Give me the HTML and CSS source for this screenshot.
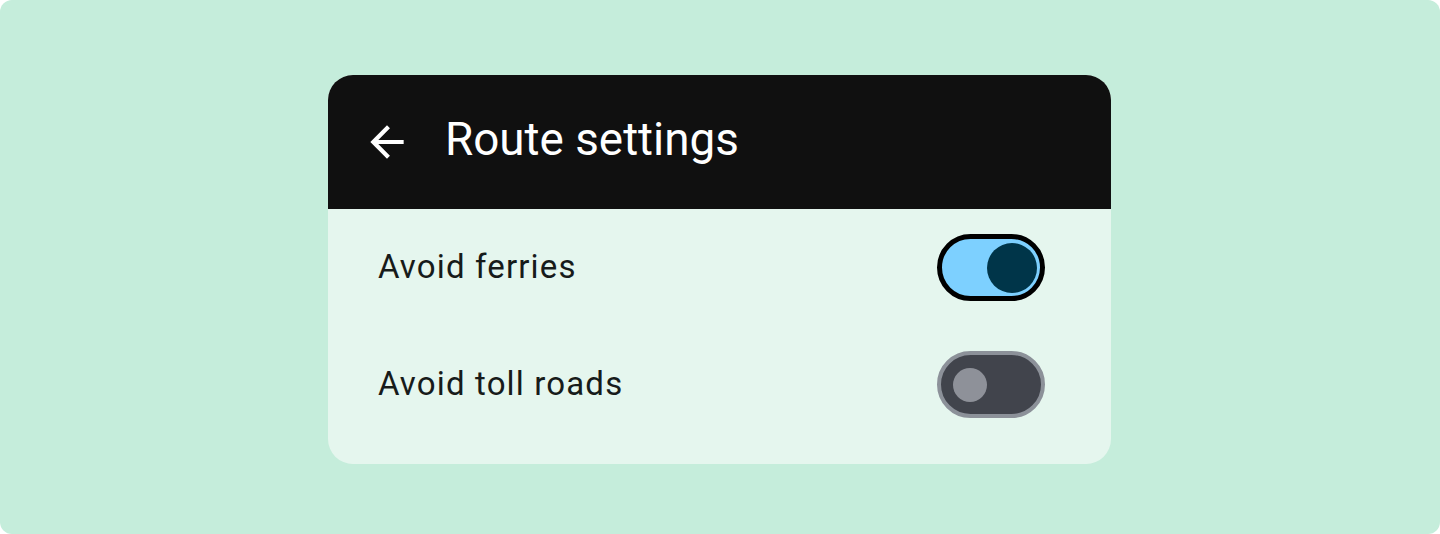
FILE: index.html
```html
<!DOCTYPE html>
<html lang="en">
<head>
<meta charset="utf-8">
<title>Route settings</title>
<link rel="stylesheet" href="styles.css">
</head>
<body>
<div class="frame">
  <div class="card">
    <div class="header">
      <svg class="back" viewBox="0 0 24 24" aria-hidden="true"><path d="M20 11H7.83l5.59-5.59L12 4l-8 8 8 8 1.41-1.41L7.83 13H20v-2z" fill="#ffffff"/></svg>
      <h1 class="title">Route settings</h1>
    </div>
    <div class="list">
      <div class="row">
        <span class="label">Avoid ferries</span>
        <div class="switch on"><span class="handle"></span></div>
      </div>
      <div class="row">
        <span class="label">Avoid toll roads</span>
        <div class="switch off"><span class="handle"></span></div>
      </div>
    </div>
  </div>
</div>
</body>
</html>
```
FILE: styles.css
```css
html, body {
  margin: 0;
  padding: 0;
  background: #ffffff;
}
body {
  font-family: Roboto, "Noto Sans", sans-serif;
}
.frame {
  width: 1440px;
  height: 534px;
  box-sizing: border-box;
  background: #c5eddb;
  border-radius: 12px;
  display: flex;
  justify-content: center;
  padding-top: 75px;
  align-items: flex-start;
}
.card {
  width: 783px;
  margin-left: -1px;
  background: #e5f6ee;
  border-radius: 25px;
  overflow: hidden;
  padding-bottom: 21px;
}
.header {
  background: #101010;
  height: 134px;
  display: flex;
  align-items: center;
  padding-left: 34px;
  gap: 33px;
}
.back {
  width: 50px;
  height: 50px;
  display: block;
  margin-bottom: 1px;
}
.title {
  margin: 0 0 5px 0;
  color: #ffffff;
  font-weight: 400;
  font-size: 45.8px;
  line-height: 1;
}
.list {
  display: flex;
  flex-direction: column;
}
.row {
  height: 117px;
  display: flex;
  align-items: center;
  justify-content: space-between;
  padding: 0 66px 0 50px;
}
.label {
  font-size: 33px;
  letter-spacing: 1.15px;
  color: #171b1a;
  margin-bottom: 2px;
}
.switch {
  width: 108px;
  height: 67px;
  box-sizing: border-box;
  border-radius: 34px;
  display: flex;
  align-items: center;
}
.switch .handle {
  display: block;
  border-radius: 50%;
}
.switch.on {
  background: #7dd0ff;
  border: 5px solid #000000;
  justify-content: flex-end;
  padding-right: 3px;
}
.switch.on .handle {
  width: 50px;
  height: 50px;
  background: #003549;
}
.switch.off {
  background: #41444c;
  border: 4px solid #8c9199;
  padding-left: 12px;
}
.switch.off .handle {
  width: 34px;
  height: 34px;
  background: #8e9199;
}
```
